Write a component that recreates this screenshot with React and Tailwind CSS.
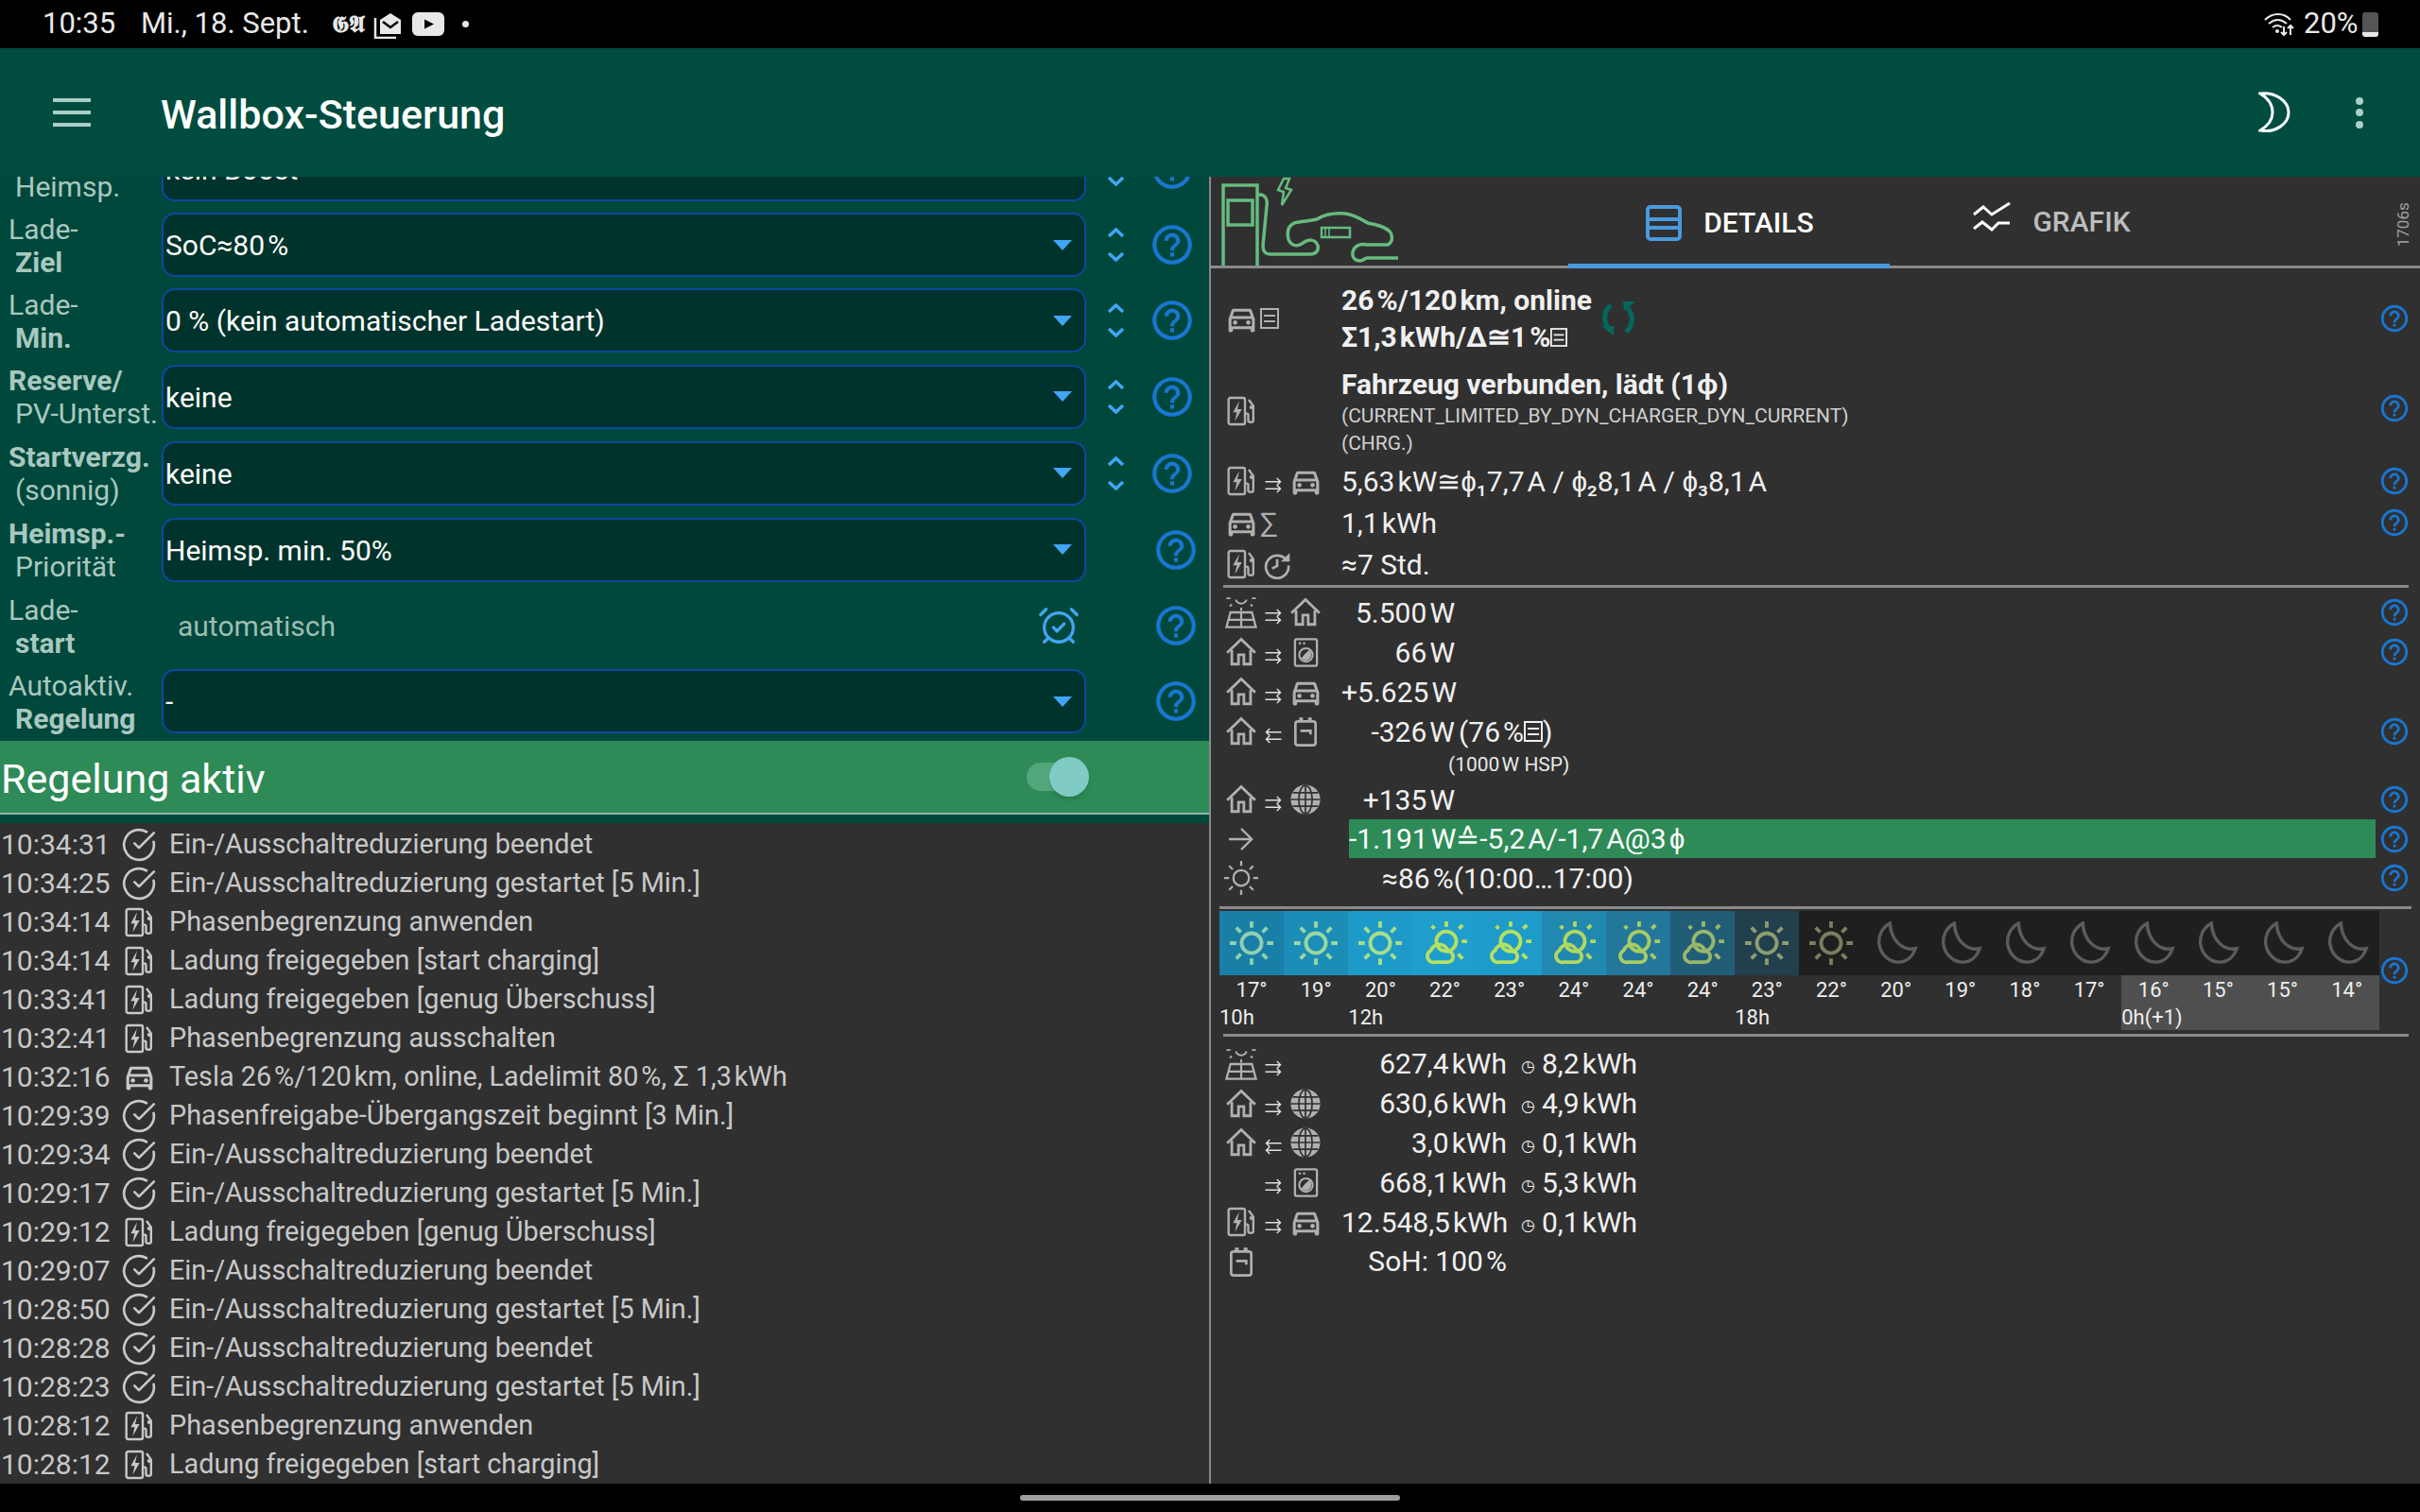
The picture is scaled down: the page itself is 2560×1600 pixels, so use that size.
import React from "react";
import { AlarmClockCheck, CircleCheckBig } from "lucide-react";

const G = "#b0b0b0";
const sp = "\u200a";

function Svg({ s = 24, w, h, box = "0 0 24 24", className = "", children }) {
  return (
    <svg width={w || s} height={h || s} viewBox={box} className={`shrink-0 ${className}`}>
      {children}
    </svg>
  );
}

function Car({ s = 37, c = G }) {
  return (
    <Svg s={s}>
      <path
        fill={c}
        d="M18.92 6.01C18.72 5.42 18.16 5 17.5 5h-11c-.66 0-1.21.42-1.42 1.01L3 12v8c0 .55.45 1 1 1h1c.55 0 1-.45 1-1v-1h12v1c0 .55.45 1 1 1h1c.55 0 1-.45 1-1v-8l-2.08-5.99zM6.85 7h10.29l1.08 3.11H5.77L6.85 7zM19 17H5v-5h14v5z"
      />
      <circle cx="7.5" cy="14.5" r="1.5" fill={c} />
      <circle cx="16.5" cy="14.5" r="1.5" fill={c} />
    </Svg>
  );
}

function Ev({ s = 32, c = G }) {
  return (
    <Svg s={s}>
      <rect x="2" y="1.5" width="13" height="21" rx="1.4" fill="none" stroke={c} strokeWidth="1.8" />
      <path d="M10.5 4 5.5 13h3l-1.5 7 5.500-9.500H9z" fill={c} />
      <path d="M15 14h1.600c.8 0 1 .6 1 1.200v4.300c0 1.800 4 1.800 4 0V8L18 3" fill="none" stroke={c} strokeWidth="1.800" />
      <circle cx="20" cy="9" r="1.500" fill={c} />
    </Svg>
  );
}

function DocMini({ w = 20, h = 22, c = G }) {
  return (
    <Svg w={w} h={h} box="0 0 20 22">
      <rect x="1" y="1" width="18" height="20" fill="none" stroke={c} strokeWidth="2" />
      <path d="M4 8h12M4 14h12" stroke={c} strokeWidth="2" />
    </Svg>
  );
}

function Home({ s = 34, c = G }) {
  return (
    <Svg s={s}>
      <path d="M1.500 12.500 12 2.500l10.500 10" fill="none" stroke={c} strokeWidth="2" />
      <path d="M5 10.500V21h5v-7h4v7h5V10.500" fill="none" stroke={c} strokeWidth="2" />
    </Svg>
  );
}

function Solar({ s = 34, c = G }) {
  return (
    <Svg s={s}>
      <path d="M8 2.500a4.200 4.200 0 0 0 8 0" fill="none" stroke={c} strokeWidth="1.400" />
      <path d="M12 8.500v2.500M1 1.500h3M20 1.500h3M5 6l-1.500 1.500M19 6l1.500 1.500" stroke={c} strokeWidth="1.400" />
      <path d="M4 12h16l3 11H1zM2.500 17.500h19M12 12v11" fill="none" stroke={c} strokeWidth="1.600" />
    </Svg>
  );
}

function Washer({ s = 31, c = G }) {
  return (
    <Svg s={s}>
      <rect x="3" y="1" width="18" height="22" rx="1.500" fill="none" stroke={c} strokeWidth="1.800" />
      <circle cx="7" cy="4.500" r="1" fill={c} />
      <circle cx="10.500" cy="4.500" r="1" fill={c} />
      <circle cx="12" cy="14" r="5.500" fill="none" stroke={c} strokeWidth="1.600" />
      <path d="M8 16.500c2-1 3-4.500 7-6.500 2.500 2.500 1.500 8-3 8.500-1.500 0-3-.500-4-2z" fill={c} />
    </Svg>
  );
}

function Battery({ s = 32, c = G }) {
  return (
    <Svg s={s}>
      <rect x="4" y="4" width="16" height="19" rx="2" fill="none" stroke={c} strokeWidth="2" />
      <path d="M7 1h3v3H7zM14 1h3v3h-3z" fill={c} />
      <path d="M8 11.500h8v3" fill="none" stroke={c} strokeWidth="2" />
    </Svg>
  );
}

function Globe({ s = 34, c = G }) {
  return (
    <Svg s={s}>
      <circle cx="12" cy="12" r="11" fill={c} />
      <g fill="none" stroke="#303030" strokeWidth="1.200">
        <ellipse cx="12" cy="12" rx="5" ry="10.500" />
        <path d="M12 1v22M1 12h22M2.500 7h19M2.500 17h19" />
      </g>
    </Svg>
  );
}

function History({ s = 32, c = G }) {
  return (
    <Svg s={s}>
      <path d="M19.800 9.500A9 9 0 1 0 21 13" fill="none" stroke={c} strokeWidth="2" />
      <path d="M22 3v7h-7z" fill={c} />
      <path d="M12 8v5.500l-4 2" fill="none" stroke={c} strokeWidth="2" />
    </Svg>
  );
}

function Sun({ s = 46, c, sw = 2 }) {
  return (
    <Svg s={s}>
      <circle cx="12" cy="12" r="5.500" fill="none" stroke={c} strokeWidth={sw} />
      <path
        d="M12 0v3.500M12 20.500V24M0 12h3.500M20.500 12H24M3.500 3.500 6 6M18 18l2.500 2.500M20.500 3.500 18 6M6 18l-2.500 2.500"
        stroke={c}
        strokeWidth={sw}
      />
    </Svg>
  );
}

function PartSun({ s = 46, c }) {
  return (
    <Svg s={s}>
      <circle cx="12.500" cy="11" r="5.500" fill="none" stroke={c} strokeWidth="2" />
      <path d="M12.500 0v3M21 11h3M19.500 4l2-2M6 4 4.500 2.500M19 18l2.500 2.500" stroke={c} strokeWidth="2" />
      <path
        d="M6.500 22.500h6.500a3 3 0 0 0 .5-6 5 5 0 0 0-9.500-.5 3.500 3.500 0 0 0 2.500 6.500z"
        fill="none"
        stroke={c}
        strokeWidth="2"
      />
    </Svg>
  );
}

function WeatherMoon({ s = 46, c = "#5c5c5c" }) {
  return (
    <Svg s={s}>
      <path
        d="M8.500 1C4 3.500 2 8 2.500 12.500 3.500 18.500 8 22.500 13 22.500c4.500 0 8-3 9.500-7.500C15 16.500 9 10 8.500 1z"
        fill="none"
        stroke={c}
        strokeWidth="1.800"
      />
    </Svg>
  );
}

function Help({ s = 50, className = "" }) {
  return (
    <Svg s={s} className={className}>
      <path
        fill="#1976d2"
        d="M11 18h2v-2h-2v2zm1-16C6.480 2 2 6.480 2 12s4.480 10 10 10 10-4.480 10-10S17.520 2 12 2zm0 18c-4.410 0-8-3.590-8-8s3.590-8 8-8 8 3.590 8 8-3.590 8-8 8zm0-14c-2.210 0-4 1.790-4 4h2c0-1.100.9-2 2-2s2 .9 2 2c0 2-3 1.750-3 5h2c0-2.250 3-2.500 3-5 0-2.210-1.790-4-4-4z"
      />
    </Svg>
  );
}

function Arrows({ left }) {
  return (
    <span className="mt-[9px] inline-flex">
      <Svg w={20} h={17} box="0 0 20 18">
        {left ? (
          <path d="M19 5H2M6 1 2 5l4 4M19 13H2M6 9l-4 4 4 4" fill="none" stroke="#e0e0e0" strokeWidth="1.500" />
        ) : (
          <path d="M1 5h17M14 1l4 4-4 4M1 13h17M14 9l4 4-4 4" fill="none" stroke="#e0e0e0" strokeWidth="1.500" />
        )}
      </Svg>
    </span>
  );
}

function Slots({ a, b, c }) {
  return (
    <>
      <span className="flex w-[34px] shrink-0 justify-center">{a}</span>
      <span className="flex w-[34px] shrink-0 justify-center">{b}</span>
      <span className="flex w-[34px] shrink-0 justify-center">{c}</span>
    </>
  );
}

function LogoGraphic() {
  return (
    <svg width="198" height="95" viewBox="11 17 198 95" className="shrink-0">
      <g fill="none" stroke="#66bb7f" strokeWidth="3.500">
        <path d="M24 112V27h36v85" />
        <rect x="29" y="43" width="26" height="26" />
        <path d="M60 37h4c5 1 7 6 6 12l-4 42c0 6 2 9 8 9h42c7 0 9-5 8-9-2-7-10-8-17-2-6 4-12 1-14-5-2-8 0-14 6-17 7-2 15-2 24-4 8-5 17-7 30-6 10 1 16 6 24 10 10 2 19 4 24 10 3 6 1 11-3 13h-22c-8-2-14 2-15 8-1 6 3 9 8 9 3 0 5-3 7-3h33" />
        <path d="m88 20-6 12 6 2-2 14 10-16-6-2 4-10z" strokeWidth="2.500" />
        <rect x="128" y="72" width="30" height="10" strokeWidth="2.500" />
        <path d="M132 72v10M136 72v10" strokeWidth="1.500" />
      </g>
    </svg>
  );
}

function StatusBar() {
  return (
    <div className="flex h-[51px] items-center bg-black pl-[45px] pr-[44px] text-[31px] text-[#e8e8e8]">
      <span className="w-[104px]">10:35</span>
      <span className="w-[202px]">Mi., 18. Sept.</span>
      <span className="w-[44px] font-['DejaVu_Serif',serif] text-[24px] font-bold">𝕲𝕬</span>
      <svg width="30" height="30" viewBox="0 0 30 30" className="shrink-0">
        <path d="M7 10 18 3l11 7v15H7z" fill="#e8e8e8" />
        <path d="m10 12 8 6 8-6" fill="none" stroke="#000" strokeWidth="2.500" />
        <path d="M2 8v21h22" fill="none" stroke="#e8e8e8" strokeWidth="2.500" />
      </svg>
      <svg width="34" height="25" viewBox="0 0 34 25" className="ml-[11px] shrink-0">
        <rect width="34" height="25" rx="6" fill="#e8e8e8" />
        <path d="M13 7.500 23 12.500 13 17.500z" fill="#000" />
      </svg>
      <span className="ml-[19px] size-[7px] rounded-full bg-[#e8e8e8]" />
      <svg width="33" height="25" viewBox="0 0 33 25" className="ml-auto shrink-0">
        <g fill="none" stroke="#e8e8e8" strokeWidth="2">
          <path d="M1 8c8-8 20-8 27 0M5 12c6-5 13-5 19 0M9 16c3-2.500 7-2.500 10 0" />
          <path d="M21 15v9M18 21l3 3 3-3M28 24v-10M25 17l3-3 3 3" />
        </g>
        <circle cx="14" cy="20" r="2" fill="#e8e8e8" />
      </svg>
      <span className="ml-[9px] w-[62px]">20%</span>
      <div className="flex h-[26px] w-[17px] flex-col overflow-hidden rounded-[3px]">
        <div className="flex-1 bg-[#555]" />
        <div className="h-[5px] bg-[#e8e8e8]" />
      </div>
    </div>
  );
}

function Toolbar() {
  return (
    <div className="flex h-[136px] items-center bg-[#004d40] pr-[60px]">
      <div className="ml-[56px] flex w-[40px] flex-col gap-[9.500px]">
        <div className="h-[3.500px] bg-[#a9cfc6]" />
        <div className="h-[3.500px] bg-[#a9cfc6]" />
        <div className="h-[3.500px] bg-[#a9cfc6]" />
      </div>
      <div className="ml-[74px] pt-[5px] text-[43px] font-medium text-white">Wallbox-Steuerung</div>
      <svg width="34" height="44" viewBox="0 0 34 44" className="ml-auto shrink-0">
        <path d="M2 2c16-2 30 8 30 20S18 44 2 41c10-6 13-12 13-19S12 8 2 2z" fill="none" stroke="#fff" strokeWidth="3" />
      </svg>
      <div className="ml-[69px] flex flex-col gap-[4.500px]">
        <span className="size-[8px] rounded-full bg-[#a9cfc6]" />
        <span className="size-[8px] rounded-full bg-[#a9cfc6]" />
        <span className="size-[8px] rounded-full bg-[#a9cfc6]" />
      </div>
    </div>
  );
}

function Label({ a, b, boldFirst }) {
  return (
    <div className="w-[171px] shrink-0 pt-[1px] text-[30px] leading-[35px] whitespace-nowrap text-[#a8c8c0]">
      <div className={boldFirst ? "pl-[9px] font-bold" : "pl-[9px]"}>{a}</div>
      <div className={b.bold ? "pl-[16px] font-bold" : "pl-[16px]"}>{b.t}</div>
    </div>
  );
}

function SelectBox({ value }) {
  return (
    <div className="flex h-[68px] w-[978px] shrink-0 items-center justify-between rounded-[14px] border-2 border-[#0d47a1] bg-[#00332b] pl-[2px] pr-[13px] text-[30px] text-white">
      <span className="pt-[1px]">{value}</span>
      <span className="h-0 w-0 border-x-[10.500px] border-t-[11px] border-x-transparent border-t-[#42a5f5]" />
    </div>
  );
}

function Chevrons() {
  return (
    <svg width="19" height="36" viewBox="0 0 19 36" className="ml-[22px] shrink-0">
      <path d="m2 9 7.500-7L17 9M2 27l7.500 7 7.500-7" fill="none" stroke="#42a5f5" strokeWidth="3.500" />
    </svg>
  );
}

const selects = [
  { a: "\u00a0", b: { t: "Heimsp." }, v: "kein Boost", h: "h-[80px]", arrows: true },
  { a: "Lade-", b: { t: "Ziel", bold: true }, v: `SoC≈80${sp}%`, h: "h-[80px]", arrows: true },
  { a: "Lade-", b: { t: "Min.", bold: true }, v: "0 % (kein automatischer Ladestart)", h: "h-[80px]", arrows: true },
  { a: "Reserve/", b: { t: "PV-Unterst." }, first: true, v: "keine", h: "h-[81px]", arrows: true },
  { a: "Startverzg.", b: { t: "(sonnig)" }, first: true, v: "keine", h: "h-[81px]", arrows: true },
  { a: "Heimsp.-", b: { t: "Priorität" }, first: true, v: "Heimsp. min. 50%", h: "h-[81px]" },
];

const log = [
  ["10:34:31", "check", "Ein-/Ausschaltreduzierung beendet"],
  ["10:34:25", "check", "Ein-/Ausschaltreduzierung gestartet [5 Min.]"],
  ["10:34:14", "ev", "Phasenbegrenzung anwenden"],
  ["10:34:14", "ev", "Ladung freigegeben [start charging]"],
  ["10:33:41", "ev", "Ladung freigegeben [genug Überschuss]"],
  ["10:32:41", "ev", "Phasenbegrenzung ausschalten"],
  ["10:32:16", "car", `Tesla 26${sp}%/120${sp}km, online, Ladelimit 80${sp}%, Σ 1,3${sp}kWh`],
  ["10:29:39", "check", "Phasenfreigabe-Übergangszeit beginnt [3 Min.]"],
  ["10:29:34", "check", "Ein-/Ausschaltreduzierung beendet"],
  ["10:29:17", "check", "Ein-/Ausschaltreduzierung gestartet [5 Min.]"],
  ["10:29:12", "ev", "Ladung freigegeben [genug Überschuss]"],
  ["10:29:07", "check", "Ein-/Ausschaltreduzierung beendet"],
  ["10:28:50", "check", "Ein-/Ausschaltreduzierung gestartet [5 Min.]"],
  ["10:28:28", "check", "Ein-/Ausschaltreduzierung beendet"],
  ["10:28:23", "check", "Ein-/Ausschaltreduzierung gestartet [5 Min.]"],
  ["10:28:12", "ev", "Phasenbegrenzung anwenden"],
  ["10:28:12", "ev", "Ladung freigegeben [start charging]"],
];

function LeftPanel() {
  return (
    <div className="flex h-full w-[1279px] shrink-0 flex-col">
      <div className="h-[597px] overflow-hidden bg-[#00483b]">
        <div className="-mt-[48px]">
          {selects.map((r, i) => (
            <div key={i} className={`flex items-center ${r.h}`}>
              <Label a={r.a} b={r.b} boldFirst={r.first} />
              <SelectBox value={r.v} />
              {r.arrows && <Chevrons />}
              <Help className={r.arrows ? "ml-[25px]" : "ml-[70px]"} />
            </div>
          ))}
          <div className="flex h-[80px] items-center">
            <Label a="Lade-" b={{ t: "start", bold: true }} />
            <span className="ml-[17px] w-[909px] pt-[1px] text-[30px] text-[#9dbdb5]">automatisch</span>
            <AlarmClockCheck size={46} strokeWidth={1.700} className="shrink-0 text-[#42a5f5]" />
            <Help className="ml-[76px]" />
          </div>
          <div className="flex h-[80px] items-center">
            <Label a="Autoaktiv." b={{ t: "Regelung", bold: true }} />
            <SelectBox value="-" />
            <Help className="ml-[70px]" />
          </div>
        </div>
      </div>
      <div className="flex h-[76px] items-center bg-[#2e8b57] text-white">
        <span className="w-[1086px] pl-[1px] pt-[5px] text-[43px]">Regelung aktiv</span>
        <div className="relative h-[30px] w-[60px] rounded-full bg-[#52a67c]">
          <span className="absolute -top-[6px] left-[24px] size-[42px] rounded-full bg-[#80cbc4] shadow-md" />
        </div>
      </div>
      <div className="h-[2px] bg-[#8fb5a8]" />
      <div className="h-[9px] bg-[#00483b]" />
      <div className="flex-1 overflow-hidden bg-[#303030] pt-[2px] text-[#c8c8c8]">
        {log.map((l, i) => (
          <div key={i} className="flex h-[41px] items-center text-[28.800px] whitespace-nowrap">
            <span className="w-[128px] shrink-0 pl-[1px] text-[30px]">{l[0]}</span>
            <span className="mr-[13px] flex w-[38px] shrink-0 justify-center">
              {l[1] === "check" && <CircleCheckBig size={38} strokeWidth={1.700} color="#c8c8c8" />}
              {l[1] === "ev" && <Ev s={32} c="#c8c8c8" />}
              {l[1] === "car" && <Car s={37} c="#c8c8c8" />}
            </span>
            <span>{l[2]}</span>
          </div>
        ))}
      </div>
    </div>
  );
}

function Row({ h, icons, children, help, helpClass = "", className = "" }) {
  return (
    <div className={`flex items-center ${h} ${className}`}>
      <div className="flex w-[138px] shrink-0 items-center pl-[15px]">{icons}</div>
      <div className="min-w-0 flex-1 whitespace-nowrap">{children}</div>
      {help && <Help s={34} className={`mr-[10px] ${helpClass}`} />}
    </div>
  );
}

function Num({ children, className = "" }) {
  return <span className={`inline-block w-[120px] text-right ${className}`}>{children}</span>;
}

function Line({ className = "" }) {
  return <div className={`h-[3px] bg-[#8a8a8a] ${className}`} />;
}

const hours = [
  { t: "17°", bg: "bg-[#1a7fa6]", i: "sun", c: "#8fd0b0", l: "10h" },
  { t: "19°", bg: "bg-[#1c8db6]", i: "sun", c: "#9ad8a0" },
  { t: "20°", bg: "bg-[#1e9ac8]", i: "sun", c: "#a8de8c", l: "12h" },
  { t: "22°", bg: "bg-[#1f9ecd]", i: "part", c: "#b6e060" },
  { t: "23°", bg: "bg-[#1e9bcb]", i: "part", c: "#b6e060" },
  { t: "24°", bg: "bg-[#2188b0]", i: "part", c: "#b0d860" },
  { t: "24°", bg: "bg-[#23779a]", i: "part", c: "#a8cc64" },
  { t: "24°", bg: "bg-[#225d78]", i: "part", c: "#98b868" },
  { t: "23°", bg: "bg-[#223f4d]", i: "sun", c: "#8c9e70", l: "18h" },
  { t: "22°", bg: "bg-[#1f1f1f]", i: "sun", c: "#7d7d60" },
  { t: "20°", bg: "bg-[#1f1f1f]", i: "moon" },
  { t: "19°", bg: "bg-[#1f1f1f]", i: "moon" },
  { t: "18°", bg: "bg-[#1f1f1f]", i: "moon" },
  { t: "17°", bg: "bg-[#1f1f1f]", i: "moon" },
  { t: "16°", bg: "bg-[#1f1f1f]", i: "moon", night: true, l: "0h(+1)" },
  { t: "15°", bg: "bg-[#1f1f1f]", i: "moon", night: true },
  { t: "15°", bg: "bg-[#1f1f1f]", i: "moon", night: true },
  { t: "14°", bg: "bg-[#1f1f1f]", i: "moon", night: true },
];

function Weather() {
  return (
    <div className="ml-[9px] flex h-[126px] items-center">
      <div className="grid grid-cols-[repeat(18,68.170px)]">
        {hours.map((h, i) => (
          <div key={i} className="flex flex-col">
            <div className={`flex h-[68px] items-center justify-center ${h.bg}`}>
              {h.i === "sun" && <Sun c={h.c} />}
              {h.i === "part" && <PartSun c={h.c} />}
              {h.i === "moon" && <WeatherMoon />}
            </div>
            <div className={`h-[58px] text-[22px] text-[#eee] ${h.night ? "bg-[#4f4f4f]" : ""}`}>
              <div className="flex h-[30px] items-center justify-center">{h.t}</div>
              <div className="flex h-[28px] items-center whitespace-nowrap">{h.l}</div>
            </div>
          </div>
        ))}
      </div>
      <Help s={34} className="ml-[-1px]" />
    </div>
  );
}

function Total({ icons, val, sub }) {
  return (
    <Row h="h-[41.800px]" icons={icons}>
      <span className="inline-block w-[175px] text-right">{val}</span>
      <span className="ml-[15px] inline-block w-[22px] align-[2px] text-[17px]">◷</span>
      <span className="inline-block">{sub}</span>
    </Row>
  );
}

function RightPanel() {
  return (
    <div className="flex h-full flex-1 flex-col bg-[#303030] text-[30px] text-[#f0f0f0]">
      <div className="flex h-[97px] items-end border-b-[3px] border-[#8a8a8a]">
        <LogoGraphic />
        <div className="ml-[180px] -mb-[3px] flex h-[92px] w-[340px] items-center justify-center gap-[23px] border-b-[5px] border-[#4a9ae0] pl-[2px]">
          <svg width="38" height="38" viewBox="0 0 38 38" className="shrink-0">
            <rect x="2" y="2" width="34" height="34" rx="3" fill="none" stroke="#4a9ae0" strokeWidth="4" />
            <path d="M2 15h34M2 24h34" stroke="#4a9ae0" strokeWidth="4" />
          </svg>
          <span className="text-[30px] font-medium text-white">DETAILS</span>
        </div>
        <div className="flex h-[92px] w-[340px] items-center justify-center gap-[23px] pb-[2px] pl-[3px]">
          <svg width="40" height="40" viewBox="0 0 40 40" className="shrink-0">
            <path d="M1 13 11 5l9 8L39 1M1 28l9-7 10 8 7-7h12" fill="none" stroke="#fff" strokeWidth="3" />
          </svg>
          <span className="text-[30px] font-medium text-[#bdbdbd]">GRAFIK</span>
        </div>
        <div className="mb-[24px] ml-auto mr-[11px] flex h-[38px] w-[14px] items-center justify-center">
          <span className="-rotate-90 text-[17px] whitespace-nowrap text-[#a0a0a0]">1706s</span>
        </div>
      </div>

      <Row
        h="h-[78px] mt-[14px]"
        help
        icons={
          <Slots
            a={<Car />}
            b={
              <span className="pr-[8px]">
                <DocMini />
              </span>
            }
          />
        }
      >
        <div className="flex items-center gap-[10px] font-bold">
          <div className="leading-[39px]">
            <div>{`26${sp}%/120${sp}km, online`}</div>
            <div className="flex items-center">
              {`Σ1,3${sp}kWh/Δ≅1${sp}%`}
              <DocMini w={18} h={20} c="#f0f0f0" />
            </div>
          </div>
          <svg width="36" height="36" viewBox="0 0 36 36" className="shrink-0">
            <path d="M10 4C3 9 1 20 8 29M26 32c7-5 9-16 2-25" fill="none" stroke="#00695c" strokeWidth="5" />
            <path d="M0 26h13v10zM23 0h13L24 10z" fill="#00695c" />
          </svg>
        </div>
      </Row>
      <Row h="h-[98px] mt-[10px]" help helpClass="mb-[6px]" icons={<Slots a={<Ev />} />}>
        <div className="leading-[39px] font-bold">Fahrzeug verbunden, lädt (1ɸ)</div>
        <div className="text-[21px] leading-[29px] text-[#d0d0d0]">(CURRENT_LIMITED_BY_DYN_CHARGER_DYN_CURRENT)</div>
        <div className="text-[21px] leading-[29px] text-[#d0d0d0]">(CHRG.)</div>
      </Row>
      <Row h="h-[44px] mt-[3px]" help icons={<Slots a={<Ev />} b={<Arrows />} c={<Car />} />}>
        {`5,63${sp}kW≅ɸ₁7,7${sp}A / ɸ₂8,1${sp}A / ɸ₃8,1${sp}A`}
      </Row>
      <Row
        h="h-[44px]"
        help
        icons={<Slots a={<Car />} b={<span className="pr-[10px] text-[#b0b0b0]">∑</span>} />}
      >
        {`1,1${sp}kWh`}
      </Row>
      <Row
        h="h-[44px]"
        icons={
          <Slots
            a={<Ev />}
            b={
              <span className="pl-[8px]">
                <History />
              </span>
            }
          />
        }
      >
        ≈7 Std.
      </Row>
      <Line className="ml-[13px] mr-[12px]" />

      <Row h="h-[42px] mt-[5px]" help icons={<Slots a={<Solar />} b={<Arrows />} c={<Home />} />}>
        <Num>{`5.500${sp}W`}</Num>
      </Row>
      <Row h="h-[42px]" help icons={<Slots a={<Home />} b={<Arrows />} c={<Washer />} />}>
        <Num>{`66${sp}W`}</Num>
      </Row>
      <Row h="h-[42px]" icons={<Slots a={<Home />} b={<Arrows />} c={<Car />} />}>
        <Num>{`+5.625${sp}W`}</Num>
      </Row>
      <Row h="h-[42px]" help icons={<Slots a={<Home />} b={<Arrows left />} c={<Battery />} />}>
        <span className="flex items-center">
          <Num>{`-326${sp}W`}</Num>
          <span className="ml-[4px]">{`(76${sp}%`}</span>
          <DocMini w={20} h={22} c="#f0f0f0" />
          <span>)</span>
        </span>
      </Row>
      <Row h="h-[30px]" icons={null}>
        <div className="pl-[113px] text-[21px] text-[#e8e8e8]">{`(1000${sp}W HSP)`}</div>
      </Row>
      <Row h="h-[42px]" help icons={<Slots a={<Home />} b={<Arrows />} c={<Globe />} />}>
        <Num>{`+135${sp}W`}</Num>
      </Row>
      <div className="flex h-[41px] items-center">
        <div className="flex w-[146px] shrink-0 pl-[18px]">
          <svg width="28" height="26" viewBox="0 0 30 28" className="shrink-0">
            <path d="M1 14h26M15 2l12 12-12 12" fill="none" stroke={G} strokeWidth="2.500" />
          </svg>
        </div>
        <div className="flex h-[41px] w-[1086px] items-center bg-[#2e8b57] text-white">
          {`-1.191${sp}W≙-5,2${sp}A/-1,7${sp}A@3${sp}ɸ`}
        </div>
        <Help s={34} className="ml-[3px]" />
      </div>
      <Row h="h-[42px]" help icons={<Slots a={<Sun s={36} c={G} sw={1.500} />} />}>
        <span className="ml-[43px]">{`≈86${sp}%(10:00…17:00)`}</span>
      </Row>
      <Line className="mt-[9px] ml-[9px] mr-[9px]" />
      <div className="mt-[2px]">
        <Weather />
      </div>
      <Line className="mt-[4px] ml-[13px] mr-[12px]" />

      <div className="mt-[8px]">
        <Total val={`627,4${sp}kWh`} sub={`8,2${sp}kWh`} icons={<Slots a={<Solar />} b={<Arrows />} />} />
        <Total
          val={`630,6${sp}kWh`}
          sub={`4,9${sp}kWh`}
          icons={<Slots a={<Home />} b={<Arrows />} c={<Globe />} />}
        />
        <Total
          val={`3,0${sp}kWh`}
          sub={`0,1${sp}kWh`}
          icons={<Slots a={<Home />} b={<Arrows left />} c={<Globe />} />}
        />
        <Total val={`668,1${sp}kWh`} sub={`5,3${sp}kWh`} icons={<Slots b={<Arrows />} c={<Washer />} />} />
        <Total
          val={`12.548,5${sp}kWh`}
          sub={`0,1${sp}kWh`}
          icons={<Slots a={<Ev />} b={<Arrows />} c={<Car />} />}
        />
        <Row h="h-[41.800px]" icons={<Slots a={<Battery />} />}>
          <span className="inline-block w-[175px] text-right">{`SoH: 100${sp}%`}</span>
        </Row>
      </div>
    </div>
  );
}

export default function App() {
  return (
    <div className="flex h-[1600px] w-[2560px] flex-col overflow-hidden bg-black font-['Roboto',sans-serif]">
      <StatusBar />
      <Toolbar />
      <div className="flex h-[1383px]">
        <LeftPanel />
        <div className="w-[2px] shrink-0 bg-[#8a8a8a]" />
        <RightPanel />
      </div>
      <div className="flex h-[30px] items-center justify-center">
        <div className="h-[6px] w-[402px] rounded-full bg-[#9e9e9e]" />
      </div>
    </div>
  );
}
